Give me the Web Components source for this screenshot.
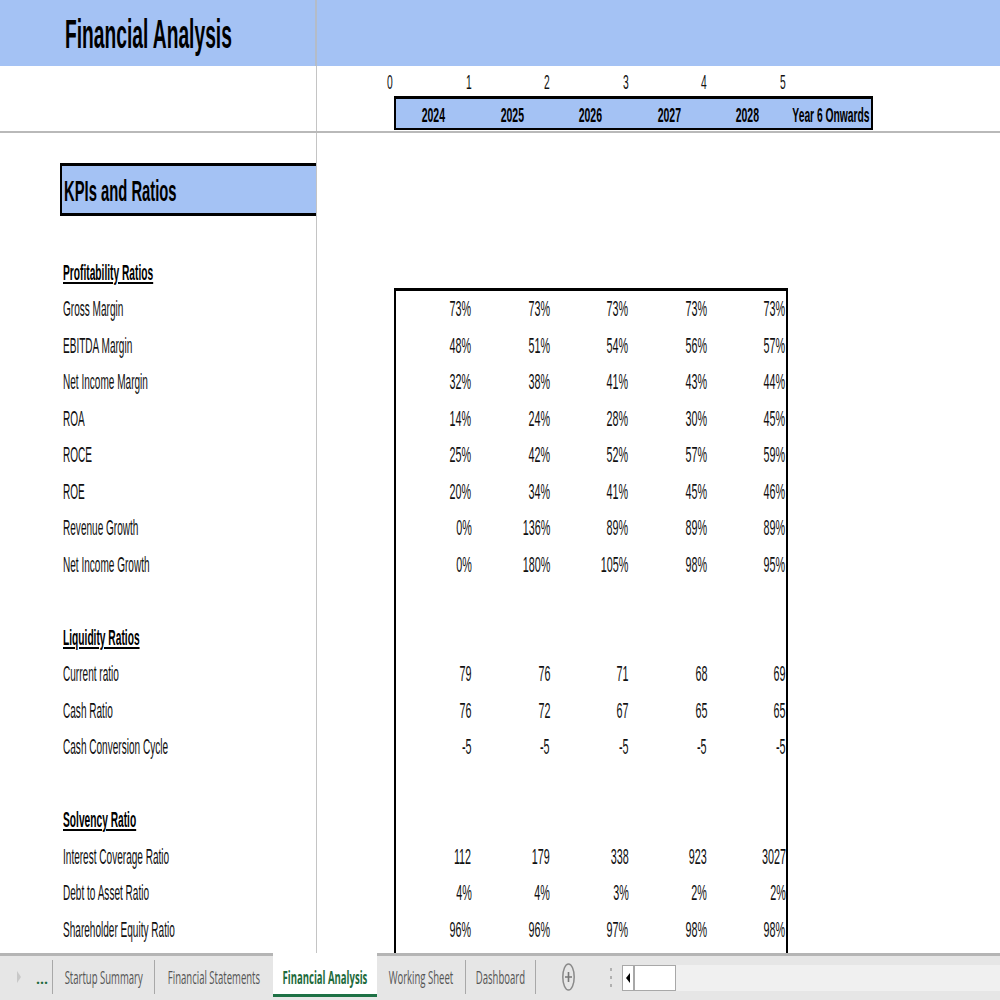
<!DOCTYPE html>
<html>
<head>
<meta charset="utf-8">
<style>
	html, body { margin: 0; padding: 0; background: #fff; }
	body { width: 1000px; height: 1000px; overflow: hidden; display: flex; flex-direction: column; font-family: "Liberation Sans", Arial, sans-serif; color: #111; }
</style>
</head>
<body>
<fin-banner title="Financial Analysis"></fin-banner>
<fin-sheet>
	<year-header></year-header>
	<fin-row height="30"></fin-row>
	<kpi-title text="KPIs and Ratios"></kpi-title>
	<fin-row height="38.5"></fin-row>
	<fin-row head label="Profitability Ratios"></fin-row>
	<fin-row top label="Gross Margin" values="73%,73%,73%,73%,73%"></fin-row>
	<fin-row label="EBITDA Margin" values="48%,51%,54%,56%,57%"></fin-row>
	<fin-row label="Net Income Margin" values="32%,38%,41%,43%,44%"></fin-row>
	<fin-row label="ROA" values="14%,24%,28%,30%,45%"></fin-row>
	<fin-row label="ROCE" values="25%,42%,52%,57%,59%"></fin-row>
	<fin-row label="ROE" values="20%,34%,41%,45%,46%"></fin-row>
	<fin-row label="Revenue Growth" values="0%,136%,89%,89%,89%"></fin-row>
	<fin-row label="Net Income Growth" values="0%,180%,105%,98%,95%"></fin-row>
	<fin-row values=",,,,"></fin-row>
	<fin-row head boxed label="Liquidity Ratios" values=",,,,"></fin-row>
	<fin-row label="Current ratio" values="79,76,71,68,69"></fin-row>
	<fin-row label="Cash Ratio" values="76,72,67,65,65"></fin-row>
	<fin-row label="Cash Conversion Cycle" values="-5,-5,-5,-5,-5"></fin-row>
	<fin-row values=",,,,"></fin-row>
	<fin-row head boxed label="Solvency Ratio" values=",,,,"></fin-row>
	<fin-row label="Interest Coverage Ratio" values="112,179,338,923,3027"></fin-row>
	<fin-row label="Debt to Asset Ratio" values="4%,4%,3%,2%,2%"></fin-row>
	<fin-row label="Shareholder Equity Ratio" values="96%,96%,97%,98%,98%"></fin-row>
	<fin-row values=",,,,"></fin-row>
</fin-sheet>
<sheet-tabs>
	<sheet-tab width="102" text="Startup Summary"></sheet-tab>
	<sheet-tab width="118" plain text="Financial Statements"></sheet-tab>
	<sheet-tab width="104" active text="Financial Analysis"></sheet-tab>
	<sheet-tab width="89" text="Working Sheet"></sheet-tab>
	<sheet-tab width="70" text="Dashboard"></sheet-tab>
</sheet-tabs>

<script>
	// Text in the sheet is squeezed horizontally, the font is not available in a narrow cut
	const textStyle = `
		.t { display: inline-block; white-space: nowrap; transform: scaleX(var(--sx, .49)); transform-origin: left center; }
		.r { transform-origin: right center; }
		.c { transform-origin: center center; }
	`;

	const gridCols = '317px 77px repeat(5, 78.5px) 86.5px 1fr';

	class FinBanner extends HTMLElement {
		constructor() {
			super();
			const shadow = this.attachShadow({mode: 'open'});
			shadow.innerHTML = `<style>
				${textStyle}
				:host { display: flex; flex: none; height: 66px; background: #a4c2f4; }
				#left { width: 317px; height: 100%; box-sizing: border-box; padding: 3px 0 0 65px; display: flex; align-items: center; border-right: 2px solid #b4bcc8; font-size: 40px; font-weight: bold; color: #000; }
				.t { --sx: .48; }
			</style>
			<div id="left"><span class="t">${this.getAttribute('title')}</span></div>`;
		}
	}
	customElements.define('fin-banner', FinBanner);

	class FinSheet extends HTMLElement {
		constructor() {
			super();
			const shadow = this.attachShadow({mode: 'open'});
			shadow.innerHTML = `<style>
				:host { display: flex; flex-direction: column; flex: none; height: 887px; overflow: hidden; }
			</style><slot></slot>`;
		}
	}
	customElements.define('fin-sheet', FinSheet);

	class YearHeader extends HTMLElement {
		constructor() {
			super();
			const shadow = this.attachShadow({mode: 'open'});
			const nums = [0, 1, 2, 3, 4, 5].map(n => `<div class="num"><span class="t r">${n}</span></div>`).join('');
			const years = ['2024', '2025', '2026', '2027', '2028'].map(y => `<div class="year"><span class="t c">${y}</span></div>`).join('');
			shadow.innerHTML = `<style>
				${textStyle}
				:host { display: block; flex: none; border-bottom: 2px solid #b9b9b9; font-size: 21px; }
				.grid { display: grid; grid-template-columns: ${gridCols}; }
				.line { border-right: 1px solid #c4c4c4; grid-row: 1 / span 2; }
				.num { height: 30px; padding: 2px 1px 0 0; box-sizing: border-box; display: flex; align-items: center; justify-content: flex-end; }
				#box { grid-column: 3 / 9; grid-row: 2; box-sizing: border-box; height: 34px; margin-bottom: 1px; padding-top: 2px; border: 2px solid #000; border-top-width: 3px; background: #a4c2f4; display: grid; grid-template-columns: repeat(5, 78.5px) minmax(0, 1fr); font-weight: bold; color: #000; }
				.year { display: flex; align-items: center; justify-content: center; padding-right: 3px; --sx: .5; }
				#last { justify-content: flex-end; padding-right: 1px; min-width: 0; --sx: .49; }
				#nums { display: contents; }
			</style>
			<div class="grid">
				<div class="line"></div>
				<div id="nums">${nums}</div>
				<div id="box">${years}<div class="year" id="last"><span class="t r">Year 6 Onwards</span></div></div>
			</div>`;
		}
	}
	customElements.define('year-header', YearHeader);

	class KpiTitle extends HTMLElement {
		constructor() {
			super();
			const shadow = this.attachShadow({mode: 'open'});
			shadow.innerHTML = `<style>
				${textStyle}
				:host { display: block; flex: none; }
				#wrap { width: 317px; box-sizing: border-box; padding-left: 60px; border-right: 1px solid #c4c4c4; }
				#box { box-sizing: border-box; height: 53px; background: #a4c2f4; border: 3px solid #000; border-left-width: 2px; border-right: 0; display: flex; align-items: center; padding: 4px 0 0 2px; font-size: 29px; font-weight: bold; color: #000; }
				.t { --sx: .51; }
			</style>
			<div id="wrap"><div id="box"><span class="t">${this.getAttribute('text')}</span></div></div>`;
		}
	}
	customElements.define('kpi-title', KpiTitle);

	class FinRow extends HTMLElement {
		constructor() {
			super();
			const shadow = this.attachShadow({mode: 'open'});
			const label = this.getAttribute('label') || '';
			const raw = this.getAttribute('values');
			const height = this.getAttribute('height') || '36.5';
			let boxHtml = '';
			if(raw !== null) {
				const cells = raw.split(',').map(v => `<div class="val"><span class="t r">${v}</span></div>`).join('');
				boxHtml = `<div id="box">${cells}</div>`;
			}
			shadow.innerHTML = `<style>
				${textStyle}
				:host { display: block; flex: none; height: ${height}px; font-size: 22px; }
				#grid { display: grid; grid-template-columns: ${gridCols}; height: 100%; }
				#label { box-sizing: border-box; padding-left: 63px; border-right: 1px solid #c4c4c4; display: flex; align-items: center; --sx: .457; }
				:host([head]) #label { font-weight: bold; color: #000; --sx: .464; }
				:host([head]) #label .t { text-decoration: underline; }
				#box { grid-column: 3 / 8; box-sizing: border-box; width: 394px; border-left: 2px solid #000; border-right: 2px solid #000; display: grid; grid-template-columns: repeat(5, 78.5px); grid-auto-rows: ${height}px; align-content: end; }
				:host([top]) #box { height: calc(100% + 3px); margin-top: -3px; border-top: 3px solid #000; }
				.val { display: flex; align-items: center; justify-content: flex-end; padding-right: 3px; }
			</style>
			<div id="grid"><div id="label"><span class="t">${label}</span></div><div></div>${boxHtml}</div>`;
		}
	}
	customElements.define('fin-row', FinRow);

	class SheetTab extends HTMLElement {
		constructor() {
			super();
			const shadow = this.attachShadow({mode: 'open'});
			shadow.innerHTML = `<style>
				:host { display: flex; flex: none; box-sizing: border-box; width: ${this.getAttribute('width')}px; height: 34px; margin-top: 4px; justify-content: center; align-items: center; border-right: 1px solid #a8a8a8; }
				:host([plain]) { border-right: 0; }
				:host([active]) { background: #fff; border-right: 0; border-bottom: 3px solid #1e7145; height: 44px; margin-top: -3px; padding-top: 6px; color: #1e6b3c; font-weight: bold; }
				span { display: inline-block; white-space: nowrap; transform: scaleX(.53); transform-origin: center center; font: inherit; }
			</style>
			<span>${this.getAttribute('text')}</span>`;
		}
	}
	customElements.define('sheet-tab', SheetTab);

	class SheetTabs extends HTMLElement {
		constructor() {
			super();
			const shadow = this.attachShadow({mode: 'open'});
			shadow.innerHTML = `<style>
				:host { display: flex; flex: none; height: 47px; box-sizing: border-box; background: #e6e6e6; border-top: 3px solid #b5b5b5; font-family: "Open Sans", sans-serif; font-size: 18px; color: #555; }
				#nav { width: 53px; flex: none; height: 34px; margin-top: 4px; box-sizing: border-box; border-right: 1px solid #a8a8a8; display: flex; align-items: center; }
				#arrow { margin-left: 17px; width: 0; height: 0; border-left: 4px solid #c8c8c8; border-top: 6px solid transparent; border-bottom: 6px solid transparent; }
				#more { margin-left: 15px; color: #1e6b3c; font-weight: bold; font-size: 14px; line-height: 1; padding-top: 3px; }
				#tabs { display: flex; flex: none; height: 100%; }
				#plus { flex: none; margin-left: 26px; margin-top: 7px; }
				#dots { flex: none; margin-left: 35px; margin-top: 12px; width: 2px; height: 20px; background: repeating-linear-gradient(#b0b0b0 0 3px, transparent 3px 8px); }
				#track { flex: 1; margin: 9px 0 9px 10px; height: 26px; box-sizing: border-box; background: #f0f0f0; display: flex; }
				#left { width: 13px; box-sizing: border-box; background: #fff; border: 1px solid #a8a8a8; border-right-width: 2px; display: flex; align-items: center; justify-content: center; }
				#left i { width: 0; height: 0; border-right: 4px solid #000; border-top: 5px solid transparent; border-bottom: 5px solid transparent; }
				#thumb { width: 41px; box-sizing: border-box; background: #fff; border: 1px solid #a8a8a8; border-left: 0; }
			</style>
			<div id="nav"><div id="arrow"></div><div id="more">...</div></div>
			<div id="tabs"><slot></slot></div>
			<svg id="plus" width="13" height="28" viewBox="0 0 13 28"><ellipse cx="6.5" cy="14" rx="5.7" ry="13" fill="none" stroke="#8a8a8a" stroke-width="1.5"/><path d="M6.5 9v10M3 14h7" stroke="#777" stroke-width="1.6" fill="none"/></svg>
			<div id="dots"></div>
			<div id="track"><div id="left"><i></i></div><div id="thumb"></div></div>`;
		}
	}
	customElements.define('sheet-tabs', SheetTabs);
</script>
</body>
</html>
